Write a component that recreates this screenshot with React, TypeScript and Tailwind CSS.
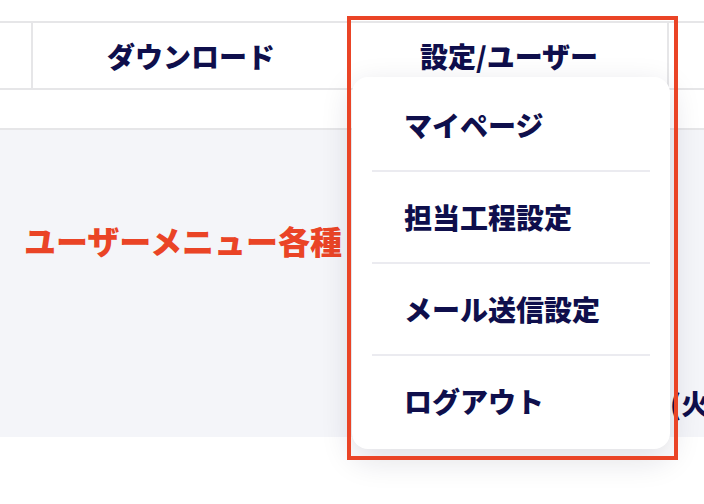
import { Fragment } from 'react'

const menuItems = ['マイページ', '担当工程設定', 'メール送信設定', 'ログアウト']

function UserMenu() {
  return (
    <div className="absolute left-[352px] top-[77px] w-[318px] rounded-2xl bg-white py-[3px] shadow-[0_10px_32px_rgba(20,20,60,0.14)]">
      {menuItems.map((label, i) => (
        <Fragment key={label}>
          {i > 0 && <div className="mx-5 h-[2px] bg-[#ebebf0]" />}
          <div className="flex h-[90px] items-center pl-[52px] text-[28px] font-black text-[#0f0f4c]">
            {label}
          </div>
        </Fragment>
      ))}
    </div>
  )
}

export default function App() {
  return (
    <div
      className="relative h-[504px] w-[704px] overflow-hidden bg-white"
      style={{ fontFamily: '"Noto Sans CJK JP", "Noto Sans", sans-serif' }}
    >
      <div className="h-[21px]" />
      {/* nav */}
      <div className="flex h-[69px] border-y-2 border-[#e6e6e8] text-[28px] font-black text-[#0f0f4c]">
        <div className="w-[31px] shrink-0" />
        <div className="flex w-[318px] shrink-0 items-center justify-center border-l-2 border-[#e6e6e8]">
          ダウンロード
        </div>
        <div className="flex w-[318px] shrink-0 items-center justify-center border-l-2 border-[#e6e6e8]">
          設定/ユーザー
        </div>
        <div className="flex-1 border-l-2 border-[#e6e6e8]" />
      </div>
      <div className="h-[40px] border-b-2 border-[#e6e6e8]" />

      {/* content */}
      <div className="flex h-[307px] flex-col bg-[#f4f5f9]">
        <div className="pl-6 pt-[94px] text-[32px] font-black leading-[32px] text-[#ea4426]">
          ユーザーメニュー各種
        </div>
        <div className="ml-[670px] mt-[133px] whitespace-nowrap text-[28px] font-black leading-[28px] text-[#0f0f4c]">
          (火)
        </div>
      </div>

      <UserMenu />

      {/* annotation */}
      <div className="absolute left-[347px] top-[16px] h-[444px] w-[331px] border-4 border-[#ea4426]" />
    </div>
  )
}
